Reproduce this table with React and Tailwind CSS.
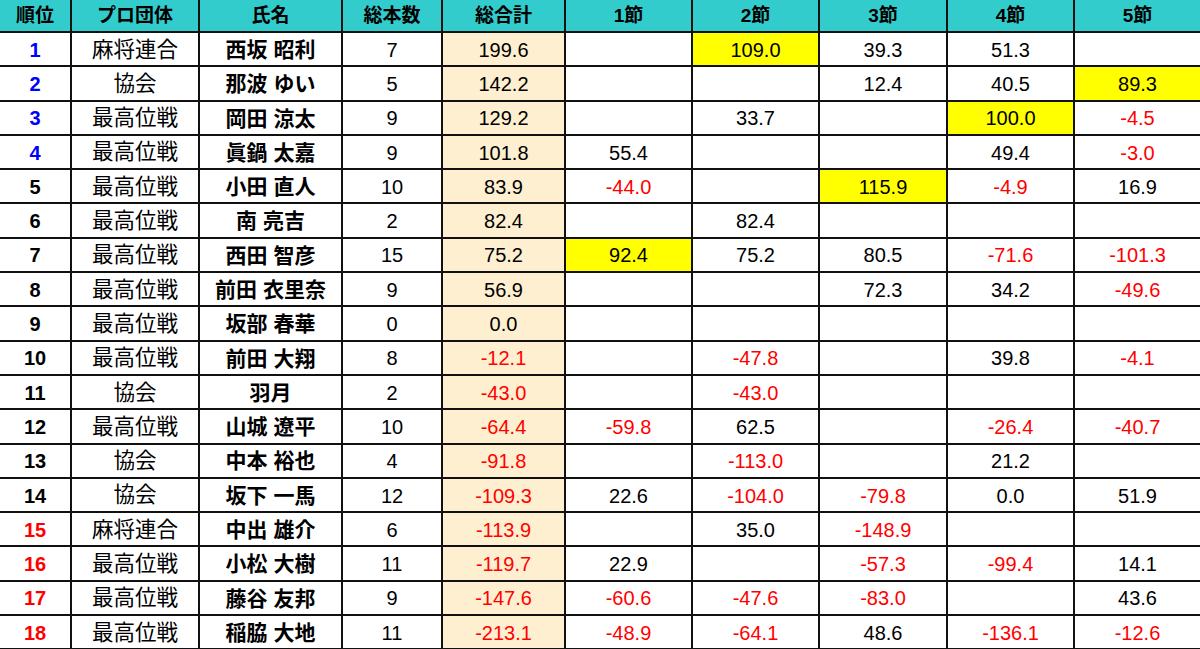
import React from 'react';

const headers = ['順位', 'プロ団体', '氏名', '総本数', '総合計', '1節', '2節', '3節', '4節', '5節'];

// [rank, org, name, count, total, [s1..s5], highlighted section index]
const rows = [
  [1, '麻将連合', '西坂 昭利', 7, '199.6', ['', '109.0', '39.3', '51.3', ''], 1],
  [2, '協会', '那波 ゆい', 5, '142.2', ['', '', '12.4', '40.5', '89.3'], 4],
  [3, '最高位戦', '岡田 涼太', 9, '129.2', ['', '33.7', '', '100.0', '-4.5'], 3],
  [4, '最高位戦', '眞鍋 太嘉', 9, '101.8', ['55.4', '', '', '49.4', '-3.0'], -1],
  [5, '最高位戦', '小田 直人', 10, '83.9', ['-44.0', '', '115.9', '-4.9', '16.9'], 2],
  [6, '最高位戦', '南 亮吉', 2, '82.4', ['', '82.4', '', '', ''], -1],
  [7, '最高位戦', '西田 智彦', 15, '75.2', ['92.4', '75.2', '80.5', '-71.6', '-101.3'], 0],
  [8, '最高位戦', '前田 衣里奈', 9, '56.9', ['', '', '72.3', '34.2', '-49.6'], -1],
  [9, '最高位戦', '坂部 春華', 0, '0.0', ['', '', '', '', ''], -1],
  [10, '最高位戦', '前田 大翔', 8, '-12.1', ['', '-47.8', '', '39.8', '-4.1'], -1],
  [11, '協会', '羽月', 2, '-43.0', ['', '-43.0', '', '', ''], -1],
  [12, '最高位戦', '山城 遼平', 10, '-64.4', ['-59.8', '62.5', '', '-26.4', '-40.7'], -1],
  [13, '協会', '中本 裕也', 4, '-91.8', ['', '-113.0', '', '21.2', ''], -1],
  [14, '協会', '坂下 一馬', 12, '-109.3', ['22.6', '-104.0', '-79.8', '0.0', '51.9'], -1],
  [15, '麻将連合', '中出 雄介', 6, '-113.9', ['', '35.0', '-148.9', '', ''], -1],
  [16, '最高位戦', '小松 大樹', 11, '-119.7', ['22.9', '', '-57.3', '-99.4', '14.1'], -1],
  [17, '最高位戦', '藤谷 友邦', 9, '-147.6', ['-60.6', '-47.6', '-83.0', '', '43.6'], -1],
  [18, '最高位戦', '稲脇 大地', 11, '-213.1', ['-48.9', '-64.1', '48.6', '-136.1', '-12.6'], -1],
];

const numColor = (v) => (v.startsWith('-') ? 'text-[#ff0000]' : 'text-black');

const rankColor = (r) => {
  if (r <= 4) return 'text-[#0000ff]';
  if (r >= 15) return 'text-[#ff0000]';
  return 'text-black';
};

const Cell = ({ last, className = '', children }) => (
  <div
    className={`flex items-center justify-center border-b-2 border-[#111] ${last ? '' : 'border-r-2'} ${className}`}
  >
    {children}
  </div>
);

export default function App() {
  return (
    <div
      className="w-[1200px] h-[649px] overflow-hidden bg-white"
      style={{ fontFamily: '"Liberation Sans", Arial, "Noto Sans CJK JP", sans-serif' }}
    >
      <div className="grid grid-cols-[72px_128px_143px_100px_123px_127px_127px_128px_127px_125px] grid-rows-[33px_repeat(18,34.3px)]">
        {headers.map((h, i) => (
          <Cell key={h} last={i === headers.length - 1} className="bg-[#33cccc] text-[19px] font-bold text-black pt-[2px]">
            {h}
          </Cell>
        ))}
        {rows.map(([rank, org, name, count, total, secs, hi]) => (
          <React.Fragment key={rank}>
            <Cell className={`text-[20px] font-bold pt-[1px] ${rankColor(rank)}`}>{rank}</Cell>
            <Cell className="text-[21.5px] text-black pt-[1px]">{org}</Cell>
            <Cell className="text-[21px] font-bold text-black pt-[1px]">{name}</Cell>
            <Cell className="text-[20px] text-black pt-[1px]">{count}</Cell>
            <Cell className={`bg-[#fdefcf] text-[20px] pt-[1px] ${numColor(total)}`}>{total}</Cell>
            {secs.map((v, i) => (
              <Cell
                key={i}
                last={i === 4}
                className={`text-[20px] pt-[1px] ${numColor(v)} ${hi === i ? 'bg-[#ffff00]' : ''}`}
              >
                {v}
              </Cell>
            ))}
          </React.Fragment>
        ))}
      </div>
    </div>
  );
}
